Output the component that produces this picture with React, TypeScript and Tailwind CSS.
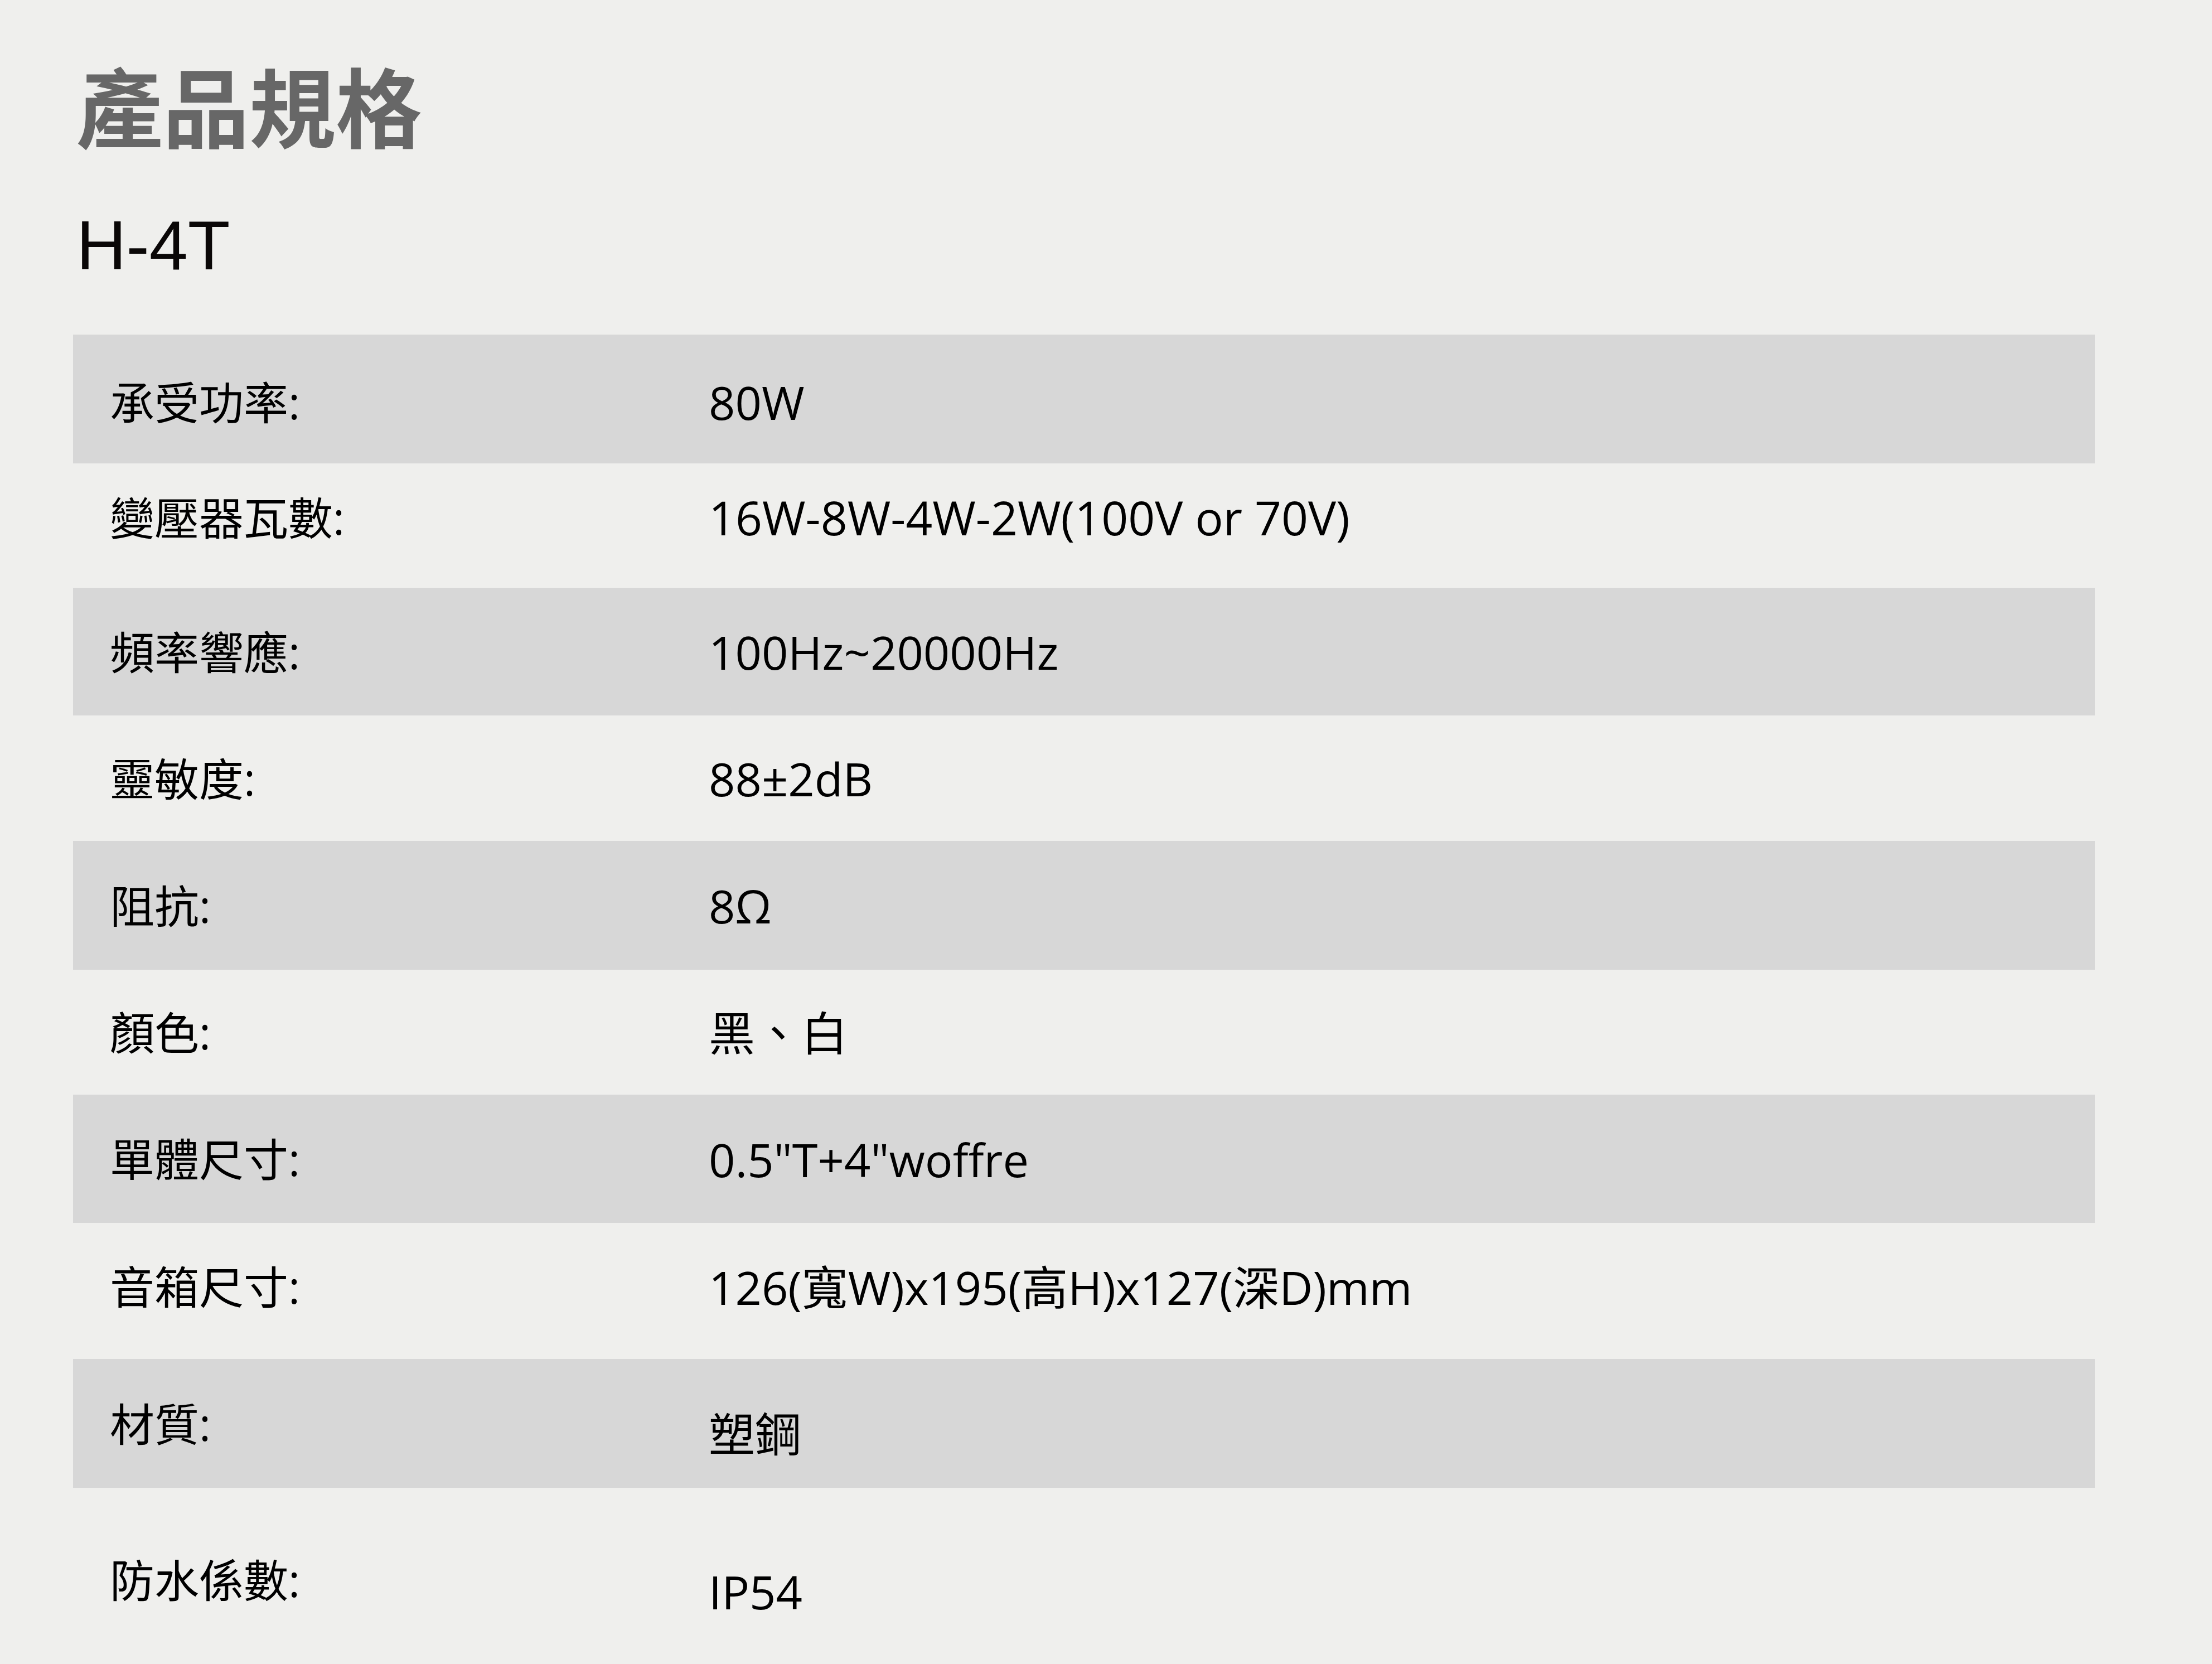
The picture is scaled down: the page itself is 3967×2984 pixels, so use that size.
const specs = [
  { label: '承受功率:', value: '80W', row: 'h-[231px] pt-[10px] bg-[#d7d7d7]', shift: '' },
  { label: '變壓器瓦數:', value: '16W-8W-4W-2W(100V or 70V)', row: 'h-[223px] pb-[30px]', shift: 'text-[84px]' },
  { label: '頻率響應:', value: '100Hz~20000Hz', row: 'h-[229px] bg-[#d7d7d7]', shift: '' },
  { label: '靈敏度:', value: '88±2dB', row: 'h-[225px]', shift: '' },
  { label: '阻抗:', value: '8Ω', row: 'h-[231px] bg-[#d7d7d7]', shift: '' },
  { label: '顏色:', value: '黑、白', row: 'h-[224px]', shift: '' },
  { label: '單體尺寸:', value: '0.5"T+4"woffre', row: 'h-[230px] bg-[#d7d7d7]', shift: '' },
  { label: '音箱尺寸:', value: '126(寬W)x195(高H)x127(深D)mm', row: 'h-[244px] pb-[16px]', shift: '' },
  { label: '材質:', value: '塑鋼', row: 'h-[231px] bg-[#d7d7d7]', shift: 'pt-[36px]' },
  { label: '防水係數:', value: 'IP54', row: 'h-[330px]', shift: 'pt-[40px]' },
]

export default function ProductSpecPage() {
  return (
    <main className="min-h-screen bg-[#efefed] font-['Open_Sans','Noto_Sans_CJK_TC',sans-serif] text-black">
      <div className="pl-[131px] pt-[115px]">
        <h1 className="pl-[6px] text-[155px] font-bold leading-none text-[#676767]">產品規格</h1>
        <h2 className="mt-[108px] pl-[6px] font-['Liberation_Sans',sans-serif] text-[124px] leading-none text-[#0a0707]">
          H-4T
        </h2>

        <div className="mt-[98px] w-[3626px]">
          {specs.map((item) => (
            <div key={item.label} className={`flex items-center ${item.row}`}>
              <div className="w-[1140px] shrink-0 pl-[66px] text-[80px] leading-none">{item.label}</div>
              <div className={`text-[83px] leading-none ${item.shift}`}>{item.value}</div>
            </div>
          ))}
        </div>
      </div>
    </main>
  )
}
